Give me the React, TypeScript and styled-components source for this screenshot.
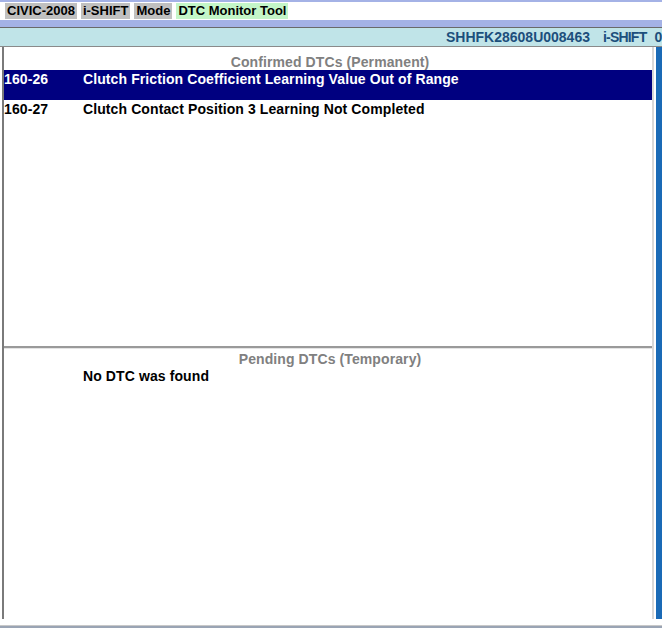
import React from "react";
import styled, { createGlobalStyle } from "styled-components";

const Global = createGlobalStyle`
  html, body { margin: 0; padding: 0; background: #ffffff; }
  body { width: 662px; height: 628px; overflow: hidden; font-family: "Liberation Sans", Arial, sans-serif; }
`;

const Screen = styled.div`
  width: 662px;
  height: 628px;
  display: flex;
  flex-direction: column;
  background: #ffffff;
  overflow: hidden;
`;

const TitleBar = styled.div`
  height: 18px;
  border-top: 2px solid #a4b2e6;
  display: flex;
  align-items: center;
  gap: 4px;
  padding-left: 5px;
  background: #ffffff;
`;

const Tag = styled.span<{ $tone: "gray" | "green" }>`
  height: 16px;
  line-height: 16px;
  padding: 0 2px;
  background: ${(p) => (p.$tone === "green" ? "#c4f6c8" : "#c0c0c0")};
  color: #000000;
  font-weight: bold;
  font-size: 13px;
  white-space: nowrap;
`;

const Band = styled.div`
  height: 7px;
  background: #a4b2e6;
  border-bottom: 1px solid #6a6a6a;
`;

const InfoBar = styled.div`
  height: 18px;
  background: #c0e4e8;
  border-bottom: 1px solid #8a8a8a;
  display: flex;
  align-items: center;
  padding-left: 446px;
  overflow: hidden;
  white-space: nowrap;
  color: #1c4f7c;
  font-weight: bold;
  font-size: 14px;
`;

const InfoItem = styled.span<{ $gap?: number; $tight?: boolean }>`
  flex-shrink: 0;
  margin-left: ${(p) => p.$gap ?? 0}px;
  letter-spacing: ${(p) => (p.$tight ? "-0.8px" : "0")};
`;

const Body = styled.div`
  flex: 1;
  display: flex;
  border-bottom: 1px solid #c8c8c8;
`;

const Panel = styled.div`
  flex: 1;
  display: flex;
  flex-direction: column;
  border-left: 2px solid #7a7a7a;
  border-right: 2px solid #d8d8d8;
  margin-left: 2px;
  margin-bottom: 6px;
`;

const Section = styled.div<{ $grow: number; $top: number }>`
  flex: ${(p) => p.$grow};
  display: flex;
  flex-direction: column;
  padding-top: ${(p) => p.$top}px;
  font-weight: bold;
  font-size: 14px;
  letter-spacing: 0.1px;
`;

const Divider = styled.div`
  height: 1px;
  border-top: 2px solid #9a9a9a;
  background: #e4e4e4;
`;

const SectionTitle = styled.div`
  text-align: center;
  color: #808080;
  height: 16px;
  line-height: 16px;
  padding-left: 4px;
`;

const Row = styled.div<{ $selected?: boolean }>`
  display: flex;
  height: ${(p) => (p.$selected ? "29px" : "18px")};
  padding-top: 1px;
  background: ${(p) => (p.$selected ? "#000080" : "transparent")};
  color: ${(p) => (p.$selected ? "#ffffff" : "#000000")};
  line-height: 16px;
  white-space: nowrap;
`;

const Code = styled.span`
  width: 79px;
`;

const Desc = styled.span``;

const Scroll = styled.div`
  width: 6px;
  margin-left: 2px;
  margin-bottom: 6px;
  background: #1a6ab6;
`;

const Footer = styled.div`
  height: 2px;
  background: #9aa4b4;
`;

type Dtc = { code: string; text: string };

const confirmed: Dtc[] = [
  { code: "160-26", text: "Clutch Friction Coefficient Learning Value Out of Range" },
  { code: "160-27", text: "Clutch Contact Position 3 Learning Not Completed" },
];

export default function App() {
  return (
    <Screen>
      <Global />
      <TitleBar>
        <Tag $tone="gray">CIVIC-2008</Tag>
        <Tag $tone="gray">i-SHIFT</Tag>
        <Tag $tone="gray">Mode</Tag>
        <Tag $tone="green">DTC Monitor Tool</Tag>
      </TitleBar>
      <Band />
      <InfoBar>
        <InfoItem>SHHFK28608U008463</InfoItem>
        <InfoItem $gap={13} $tight>i-SHIFT</InfoItem>
        <InfoItem $gap={8}>00</InfoItem>
      </InfoBar>
      <Body>
        <Panel>
          <Section $grow={297} $top={7}>
            <SectionTitle>Confirmed DTCs (Permanent)</SectionTitle>
            {confirmed.map((d, i) => (
              <Row key={d.code} $selected={i === 0}>
                <Code>{d.code}</Code>
                <Desc>{d.text}</Desc>
              </Row>
            ))}
          </Section>
          <Divider />
          <Section $grow={272} $top={2}>
            <SectionTitle>Pending DTCs (Temporary)</SectionTitle>
            <Row>
              <Code />
              <Desc>No DTC was found</Desc>
            </Row>
          </Section>
        </Panel>
        <Scroll />
      </Body>
      <Footer />
    </Screen>
  );
}
